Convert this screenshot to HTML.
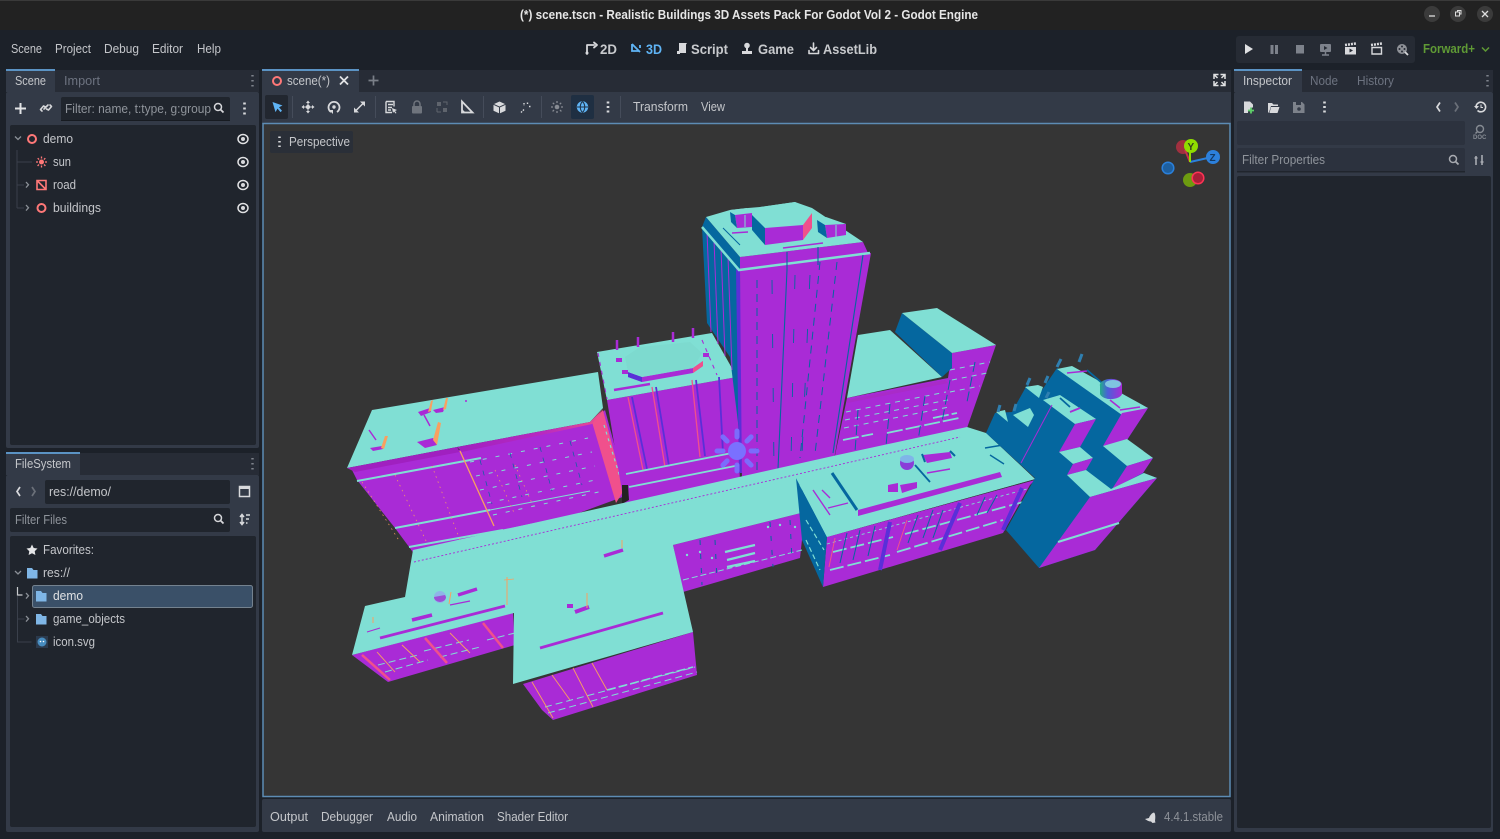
<!DOCTYPE html>
<html><head><meta charset="utf-8"><title>scene.tscn - Godot Engine</title>
<style>
html,body{margin:0;padding:0;background:#1c2129;width:1500px;height:839px;overflow:hidden}
svg{display:block}
text{font-family:"Liberation Sans","DejaVu Sans",sans-serif;font-size:13px;fill:#c4c6ca}
.d{fill:#6d7380}
.h{fill:#8f949b}
.b{font-size:14px;font-weight:bold;fill:#c8cacd}
.i{fill:none;stroke:#d6d7da;stroke-width:1.6;stroke-linecap:round;stroke-linejoin:round}
.r{fill:none;stroke:#ff7878;stroke-width:2}
.w{fill:#d8d9dc}
.f{fill:#7fb6e6}
.c{fill:#80dfd4}.p{fill:#a92bd6}.u{fill:#05679f}.k{fill:#f0508c}.o{fill:#f9a060}.n{fill:#5a2fd8}
.lc{stroke:#80dfd4;fill:none}.lu{stroke:#05679f;fill:none}.lp{stroke:#a92bd6;fill:none}.lk{stroke:#f0508c;fill:none}.ln{stroke:#5a2fd8;fill:none}.lo{stroke:#f9a060;fill:none}
</style></head><body>
<svg width="1500" height="839" viewBox="0 0 1500 839" xmlns="http://www.w3.org/2000/svg">
<defs>
<linearGradient id="st" x1="0" x2="1" y1="0" y2="0"><stop offset="0" stop-color="#a020c0"/><stop offset=".6" stop-color="#b82ac0"/><stop offset="1" stop-color="#f0508c"/></linearGradient>
<linearGradient id="tk" x1="0" x2="1" y1="0" y2="0"><stop offset="0" stop-color="#22b088"/><stop offset=".35" stop-color="#4a60d8"/><stop offset="1" stop-color="#a92bd6"/></linearGradient>
</defs>
<rect width="1500" height="839" fill="#1c2129"/>
<!-- title bar -->
<rect width="1500" height="30" fill="#222222"/>
<rect width="1500" height="1" fill="#3a3a3a"/>
<text x="520" y="19" textLength="458" lengthAdjust="spacingAndGlyphs" style="font-size:12.5px;font-weight:bold;fill:#e6e6e6">(*) scene.tscn - Realistic Buildings 3D Assets Pack For Godot Vol 2 - Godot Engine</text>
<circle cx="1432" cy="14" r="8" fill="#3b3b3b"/><circle cx="1458" cy="14" r="8" fill="#3b3b3b"/><circle cx="1485" cy="14" r="8" fill="#3b3b3b"/>
<path d="M1429 16h6" stroke="#ddd" stroke-width="1.3"/>
<path d="M1455.500 12h4v4h-4zM1457.500 12v-1.500h3.500v3.500h-1.500" stroke="#ddd" fill="none"/>
<path d="M1482 11l6 6M1488 11l-6 6" stroke="#ddd" stroke-width="1.3"/>
<!-- menu -->
<text x="11" y="53" textLength="31" lengthAdjust="spacingAndGlyphs">Scene</text>
<text x="55" y="53" textLength="36" lengthAdjust="spacingAndGlyphs">Project</text>
<text x="104" y="53" textLength="35" lengthAdjust="spacingAndGlyphs">Debug</text>
<text x="152" y="53" textLength="31" lengthAdjust="spacingAndGlyphs">Editor</text>
<text x="197" y="53" textLength="24" lengthAdjust="spacingAndGlyphs">Help</text>
<!-- main switches -->
<path class="i" d="M587 54v-9h7M594 42.500l3 2.500-3 2.500" style="stroke-width:1.800"/><circle cx="587" cy="53" r="1.500" class="w"/>
<text class="b" x="600" y="54" textLength="17" lengthAdjust="spacingAndGlyphs">2D</text>
<path d="M632 44v7h7M632 44l8 8M640 45v3M634 51h4" stroke="#5fb4f5" stroke-width="1.800" fill="none"/>
<text class="b" x="646" y="54" textLength="16" lengthAdjust="spacingAndGlyphs" style="fill:#5fb4f5">3D</text>
<path class="w" d="M679 43h8l-1 1.500v8.500h-8c0-1 .5-2 1-2.500zM677 51h3v3h-3z"/>
<text class="b" x="691" y="54" textLength="37" lengthAdjust="spacingAndGlyphs">Script</text>
<circle cx="747" cy="45.500" r="2.800" class="w"/><path class="w" d="M746 47h2v4h-2zM742 51h10v3h-10z"/>
<text class="b" x="758" y="54" textLength="36" lengthAdjust="spacingAndGlyphs">Game</text>
<path class="i" d="M813.500 43v7M810.500 47.500l3 3 3-3M809 50.500v3h9.500v-3"/>
<text class="b" x="823" y="54" textLength="54" lengthAdjust="spacingAndGlyphs">AssetLib</text>
<!-- play group -->
<rect x="1236" y="36" width="179" height="27" rx="3" fill="#262b34"/>
<path d="M1245 44l8 5-8 5z" fill="#e0e1e3"/>
<path d="M1270.500 45h3v9h-3zM1275 45h3v9h-3z" fill="#7d828b"/>
<rect x="1296" y="45" width="8" height="8.500" fill="#7d828b"/>
<rect x="1320" y="44" width="11" height="8" rx="1" fill="#7d828b"/><path d="M1325.500 52v2.500M1322 55h7" stroke="#7d828b" stroke-width="1.500"/><path d="M1324 46l3.500 2-3.500 2z" fill="#262b34"/>
<path class="w" d="M1345 47h11v7.500h-11z"/><path d="M1345 45l11-1.500" stroke="#d8d9dc" stroke-width="2.500" stroke-dasharray="2 1"/><path d="M1349.500 48.500l3.500 2-3.500 2z" fill="#262b34"/>
<path d="M1372 47.500h9.500v6.500h-9.500z" fill="none" stroke="#d8d9dc" stroke-width="1.400"/><path d="M1371 45l11-1.500" stroke="#d8d9dc" stroke-width="2.500" stroke-dasharray="2 1"/>
<circle cx="1402" cy="49" r="5" fill="#8f9298"/><g fill="#262b34"><circle cx="1402" cy="46.500" r="1"/><circle cx="1399.500" cy="49" r="1"/><circle cx="1404.500" cy="49" r="1"/><circle cx="1402" cy="51.500" r="1"/></g><path d="M1405 52l3 3" stroke="#d8d9dc" stroke-width="1.800"/>
<text x="1423" y="53" textLength="52" lengthAdjust="spacingAndGlyphs" style="font-weight:bold;fill:#5f9a35">Forward+</text>
<path d="M1482 47.500l3.500 3.500 3.500-3.500" stroke="#5f9a35" stroke-width="1.500" fill="none"/>
<!-- Scene dock -->
<rect x="6" y="70" width="253" height="22" fill="#272c36"/>
<rect x="6" y="92" width="253" height="356" fill="#333a47" rx="2"/>
<rect x="6" y="70" width="49" height="22" fill="#333a47"/><rect x="6" y="69" width="49" height="2" fill="#5b93c4"/>
<text x="15" y="85" textLength="31" lengthAdjust="spacingAndGlyphs">Scene</text>
<text class="d" x="64" y="85" textLength="36" lengthAdjust="spacingAndGlyphs">Import</text>
<path d="M252.500 75v1.500M252.500 80v1.500M252.500 85v1.500" stroke="#7e838c" stroke-width="2.400"/>
<path d="M20.500 103v11M15 108.500h11" stroke="#e2e3e5" stroke-width="2"/>
<path class="i" d="M42 111l-1.500-1.500 3-3.500 2 1M50 105l1.500 1.500-3 3.500-2-1M44 109l4-4"/>
<rect x="61" y="97" width="169" height="24" rx="2" fill="#20252d"/><rect x="61" y="120" width="169" height="1" fill="#171b21"/>
<text class="h" x="65" y="113" textLength="146" lengthAdjust="spacingAndGlyphs">Filter: name, t:type, g:group</text>
<circle cx="218" cy="107" r="3.500" fill="none" stroke="#d6d7da" stroke-width="1.500"/><path d="M220.500 109.500l3 3" stroke="#d6d7da" stroke-width="1.800"/>
<path d="M244.500 102.500v2M244.500 107.500v2M244.500 112.500v2" stroke="#d8d9dc" stroke-width="2.600"/>
<rect x="10" y="125" width="246" height="320" rx="2" fill="#20252d"/>
<path d="M15 136.500l3 3 3-3" stroke="#8b9097" stroke-width="1.300" fill="none"/>
<circle cx="32" cy="139" r="4" class="r"/>
<text x="43" y="143" textLength="30" lengthAdjust="spacingAndGlyphs">demo</text>
<path d="M17 150v58M17 162h15M17 185h7M17 208h7" stroke="#3a404b" stroke-width="1"/>
<circle cx="41.500" cy="162" r="2.500" fill="#ff7878"/><path d="M41.500 156.500v2M41.500 165.500v2M36 162h2M45 162h2M37.700 158.200l1.400 1.400M44 164.500l1.400 1.400M45.300 158.200l-1.400 1.400M39 164.500l-1.400 1.400" stroke="#ff7878" stroke-width="1.300"/>
<text x="53" y="166" textLength="18" lengthAdjust="spacingAndGlyphs">sun</text>
<path d="M26 182l2.500 2.800-2.500 2.800" stroke="#8b9097" stroke-width="1.300" fill="none"/>
<path d="M37 180.500h9v9h-9zM37 180.500l9 9" fill="none" stroke="#ff7878" stroke-width="1.600"/>
<text x="53" y="189" textLength="23" lengthAdjust="spacingAndGlyphs">road</text>
<path d="M26 205l2.500 2.800-2.500 2.800" stroke="#8b9097" stroke-width="1.300" fill="none"/>
<circle cx="41.500" cy="208" r="4" class="r"/>
<text x="53" y="212" textLength="48" lengthAdjust="spacingAndGlyphs">buildings</text>
<g fill="none" stroke="#e0e1e3" stroke-width="1.500">
<ellipse cx="243" cy="139" rx="5" ry="4.500"/><ellipse cx="243" cy="162" rx="5" ry="4.500"/><ellipse cx="243" cy="185" rx="5" ry="4.500"/><ellipse cx="243" cy="208" rx="5" ry="4.500"/></g>
<circle cx="243" cy="139" r="2" class="w"/><circle cx="243" cy="162" r="2" class="w"/><circle cx="243" cy="185" r="2" class="w"/><circle cx="243" cy="208" r="2" class="w"/>
<!-- FileSystem -->
<rect x="6" y="453" width="253" height="22" fill="#272c36"/>
<rect x="6" y="475" width="253" height="357" fill="#333a47" rx="2"/>
<rect x="6" y="453" width="74" height="22" fill="#333a47"/><rect x="6" y="452" width="74" height="2" fill="#5b93c4"/>
<text x="15" y="468" textLength="56" lengthAdjust="spacingAndGlyphs">FileSystem</text>
<path d="M252.500 458v1.500M252.500 463v1.500M252.500 468v1.500" stroke="#7e838c" stroke-width="2.400"/>
<path d="M20 487l-3 4.500 3 4.500" stroke="#d8d9dc" stroke-width="1.700" fill="none"/><path d="M32 487l3 4.500-3 4.500" stroke="#6b7079" stroke-width="1.700" fill="none"/>
<rect x="45" y="480" width="185" height="24" rx="2" fill="#20252d"/>
<text x="49" y="496" textLength="62" lengthAdjust="spacingAndGlyphs">res://demo/</text>
<rect x="239.500" y="486.500" width="10" height="10" fill="none" stroke="#d8d9dc" stroke-width="1.500"/><rect x="239" y="486" width="11" height="3" fill="#d8d9dc"/>
<rect x="10" y="508" width="220" height="24" rx="2" fill="#20252d"/>
<text class="h" x="15" y="524" textLength="52" lengthAdjust="spacingAndGlyphs">Filter Files</text>
<circle cx="218" cy="518" r="3.500" fill="none" stroke="#d6d7da" stroke-width="1.500"/><path d="M220.500 520.500l3 3" stroke="#d6d7da" stroke-width="1.800"/>
<path d="M242 515v9M240 517l2-2.500 2 2.500M240 522l2 2.500 2-2.500M246 515h4M246 519h3M246 523h1.500" stroke="#d8d9dc" stroke-width="1.500" fill="none"/>
<rect x="10" y="536" width="246" height="291" rx="2" fill="#20252d"/>
<path d="M32 544.500l1.700 3.500 3.800.5-2.800 2.700.7 3.800-3.400-1.800-3.400 1.800.7-3.800-2.800-2.700 3.800-.5z" fill="#e4e5e7"/>
<text x="43" y="554" textLength="51" lengthAdjust="spacingAndGlyphs">Favorites:</text>
<path d="M15 571l3 3 3-3" stroke="#8b9097" stroke-width="1.300" fill="none"/>
<path class="f" d="M27 568h5l1.500 2h4v8.500h-10.500z"/>
<text x="43" y="577" textLength="27" lengthAdjust="spacingAndGlyphs">res://</text>
<rect x="32.500" y="585.500" width="220" height="22" rx="2" fill="#3a5068" stroke="#74828f"/>
<path d="M17.500 587v8h5" stroke="#c8cacd" stroke-width="1.200" fill="none"/>
<path d="M17.500 596v46h14M17.500 619h7" stroke="#3a404b" fill="none"/>
<path d="M26 593l2.500 2.800-2.500 2.800" stroke="#8b9097" stroke-width="1.300" fill="none"/>
<path class="f" d="M36 591h5l1.500 2h4v8.500h-10.500z"/>
<text x="53" y="600" textLength="30" lengthAdjust="spacingAndGlyphs" style="fill:#dfe1e3">demo</text>
<path d="M26 616l2.500 2.800-2.500 2.800" stroke="#8b9097" stroke-width="1.300" fill="none"/>
<path class="f" d="M36 614h5l1.500 2h4v8.500h-10.500z"/>
<text x="53" y="623" textLength="72" lengthAdjust="spacingAndGlyphs">game_objects</text>
<rect x="36" y="636" width="12" height="12" fill="#2b3a4d"/><circle cx="42" cy="642" r="4.500" fill="#478cbf"/><circle cx="40.500" cy="641.500" r=".8" fill="#fff"/><circle cx="43.500" cy="641.500" r=".8" fill="#fff"/>
<text x="53" y="646" textLength="42" lengthAdjust="spacingAndGlyphs">icon.svg</text>
<!-- center -->
<rect x="262" y="70" width="969" height="22" fill="#272c36"/>
<rect x="262" y="92" width="969" height="32" fill="#333a47"/>
<rect x="262" y="70" width="97" height="22" fill="#333a47"/><rect x="262" y="69" width="97" height="2" fill="#5b93c4"/>
<circle cx="277" cy="81" r="4" class="r"/>
<text x="287" y="85" textLength="43" lengthAdjust="spacingAndGlyphs">scene(*)</text>
<path d="M340 76.500l8 8M348 76.500l-8 8" stroke="#e2e3e5" stroke-width="1.800"/>
<path d="M373.500 75.500v10M368.500 80.500h10" stroke="#7a7f88" stroke-width="1.700"/>
<path d="M1214 79v-4.500h4.500M1225 79v-4.500h-4.500M1214 81v4.500h4.500M1225 81v4.500h-4.500M1214.500 75l3 3M1224.500 75l-3 3M1214.500 85l3-3M1224.500 85l-3-3" stroke="#e0e1e3" stroke-width="1.500" fill="none"/>
<!-- toolbar -->
<rect x="265" y="95" width="23" height="24" rx="2" fill="#222730"/>
<path d="M272.500 102l10 3.500-3.500 1.800 3 3.500-1.500 1.300-3-3.500-2 3.500z" fill="#5fb4f5"/>
<path d="M292.500 96v22M375.500 96v22M483.500 96v22M541.500 96v22M620.500 96v22" stroke="#454c5a" stroke-width="1"/>
<path d="M308 101v12M302 107h12" stroke="#d6d7da" stroke-width="1"/><circle cx="308" cy="107" r="2.200" class="w"/>
<path d="M308 100.500l-2 2.500h4zM308 113.500l-2-2.500h4zM301.500 107l2.500-2v4zM314.500 107l-2.500-2v4z" class="w"/>
<path d="M331 112a5.500 5.500 0 1 1 6 0" fill="none" stroke="#d8d9dc" stroke-width="1.800"/><circle cx="334" cy="107" r="1.700" class="w"/><path d="M329 110h4v4z" class="w"/>
<path d="M355 111.500l8-8" stroke="#d8d9dc" stroke-width="1.500"/><path d="M360 101.500h5v5zM354 107.500v5h5z" class="w"/>
<path d="M386 101.500h8v5M386 101.500v11h6M388 104.500h5M388 107.500h4M388 110h3" stroke="#d8d9dc" stroke-width="1.400" fill="none"/><path d="M392 108l5 2-2 1 1.500 2-1 .5-1.500-2-1 1.500z" class="w"/>
<rect x="412" y="106" width="10" height="7.500" rx="1" fill="#6f747d"/><path d="M414 106v-2a3 3 0 0 1 6 0v2" fill="none" stroke="#6f747d" stroke-width="1.500"/>
<path d="M437 102h4v4h-4zM443 108h4v4h-4z" fill="#5f646d"/><path d="M443 102h4v3M437 112v-4M441 112h-4" fill="none" stroke="#5f646d"/>
<path d="M462 101.500l10.500 11h-10.500z" fill="none" stroke="#d8d9dc" stroke-width="1.800"/><path d="M462 109l3.500 3.500h-3.500z" class="w"/>
<path d="M499.500 101.500l6 2.800v6.400l-6 2.800-6-2.800v-6.400z" class="w"/><path d="M493.500 104.300l6 2.800 6-2.800M499.500 107.100v6.400" stroke="#333a47" stroke-width="1" fill="none"/>
<path d="M521 112.500l3-3M527.500 102.500v2.500M530.500 106.500h-2M524 103v3" stroke="#d8d9dc" stroke-width="1.400" fill="none" stroke-dasharray="1.500 1.200"/>
<circle cx="557" cy="107" r="2.300" fill="#878b93"/><path d="M557 101v2M557 111v2M551 107h2M561 107h2M552.800 102.800l1.400 1.400M560 110l1.400 1.400M561.200 102.800l-1.400 1.400M554 110l-1.400 1.400" stroke="#878b93" stroke-width="1.300"/>
<rect x="571" y="95" width="23" height="24" rx="2" fill="#1f2f42"/>
<circle cx="582.500" cy="107" r="5.700" fill="#5fb4f5"/><path d="M577 107h11M582.500 101.500c-3 3-3 8 0 11M582.500 101.500c3 3 3 8 0 11" stroke="#1f2f42" stroke-width="1" fill="none"/>
<path d="M608 101.500v2M608 106v2M608 110.500v2" stroke="#d8d9dc" stroke-width="2.600"/>
<text x="633" y="111" textLength="55" lengthAdjust="spacingAndGlyphs">Transform</text>
<text x="701" y="111" textLength="24" lengthAdjust="spacingAndGlyphs">View</text>
<!-- viewport -->
<rect x="263" y="123.500" width="967" height="673" fill="#353535" stroke="#5d8cb4" stroke-width="1.500"/>
<!-- 3D scene -->
<!-- back right building -->
<polygon class="p" points="847,398 948,378 952,353 996,345 967,428 833,465"/>
<polygon class="c" points="847,398 858,335 890,330 942,377"/>
<polygon class="u" points="895,332 902,313 952,353 952,368 942,377"/>
<polygon class="c" points="902,313 937,308 996,345 952,353"/>
<polygon points="848,400 945,380 948,383 847,403" fill="#a92bc8"/>
<g class="lc" stroke-width="1" stroke-dasharray="5 5">
<path d="M846 412l100-20M845 420l108-21M844 428l105-21M950 370l40-8M952 380l35-7M950 392l30-6"/></g>
<path class="lc" stroke-width="1.800" stroke-dasharray="16 3" d="M843 440l30-6M887 433l72-15M933 418l24-5"/>
<g class="lu" stroke-width="1" stroke-dasharray="10 5"><path d="M858 410l-3 42M890 404l-4 42M925 396l-7 45M950 380l-8 42M975 362l-8 40"/></g>
<!-- left long building -->
<polygon class="p" points="352,470 460,450 592,423 605,410 628,495 560,520 415,555 395,528 357,480"/>
<polygon class="k" points="592,422 603,410 624,490 616,503"/>
<path class="lc" stroke-width="1.200" stroke-dasharray="3 4" d="M604 425l20 65"/>
<polygon class="c" points="347,468 372,410 598,372 603,408 590,422 457,447"/>
<polygon points="347,468 457,447 460,452 355,472" fill="#a020c0"/>
<polygon points="457,447 590,422 603,409 592,424 462,452" fill="url(#st)"/>
<path class="lc" stroke-width="2" d="M357 481l124-23"/>
<path class="lc" stroke-width="2" d="M395 528l95-18M409 547l94-17"/>
<path class="lc" stroke-width="1" d="M503 530l87-18M490 510l100-19"/>
<path class="lo" stroke-width="1.300" d="M460 451l34 75"/>
<g class="lo" stroke-width=".7" stroke-dasharray="1.500 4"><path d="M362 482l38 60M395 475l32 68M432 466l28 74M495 470l20 45M515 465l20 45"/></g>
<g class="lc" stroke-width="1" stroke-dasharray="4 9"><path d="M470 462l118-24M476 476l116-24M480 490l115-24M487 503l113-24M493 515l110-24"/></g>
<g class="lu" stroke-width=".7" stroke-dasharray="5 6"><path d="M480 460l12 44M510 453l12 44M540 447l12 44M570 441l12 44"/></g>
<polygon class="p" points="418,412 430,408 431,412 421,416"/><polygon class="o" points="428,412 431,401 433,400 431,411"/>
<polygon class="p" points="433,410 445,407 443,412 436,413"/><polygon class="o" points="443,410 446,398 448,398 446,409"/>
<polygon class="p" points="417,442 433,438 437,445 425,448"/><polygon class="o" points="433,440 438,422 441,423 437,445"/>
<polygon class="p" points="370,448 382,446 383,449 373,451"/><polygon class="o" points="381,448 385,436 388,436 384,449"/>
<path class="lp" d="M369 430l7 10M424 415l6 11" stroke-width="1.500"/><circle cx="466" cy="401" r="1" fill="#a92bd6"/>
<!-- center building -->
<polygon class="p" points="607,400 737,377 740,485 625,510"/>
<polygon class="c" points="597,352 712,333 737,377 607,400"/>
<polygon class="p" points="628,372 642,377 693,368 703,361 703,366 693,373 642,382 628,377"/>
<polygon class="n" points="628,372 642,377 642,382 628,377"/>
<polygon class="k" points="693,368 703,361 703,366 693,373"/>
<polygon fill="#7ddacf" points="625,357 640,347 690,342 702,353 693,368 642,377 628,372"/>
<path class="lp" stroke-width="2" d="M614 390l36-6M617 340v10M638 337v10M673 332v10M693 328v10" style="stroke-width:2.500"/>
<path class="lp" stroke-width="1.100" stroke-dasharray="4 5" d="M598 353l9 46M702 340l15 35"/>
<path class="p" d="M616 358h6v4h-6zM622 370h6v4h-6zM703 353h6v4h-6z"/>
<path class="lk" stroke-width="1.300" d="M628 397l15 73M652 387l13 80M692 380l8 77"/>
<path class="ln" stroke-width="1.800" d="M632 397l15 72M656 387l13 79M696 380l9 76M719 377l4 76"/>
<path class="lc" stroke-width="1.800" d="M626 474l111-22M629 487l111-22"/>
<path fill="#222" d="M622 485h6l1 15-7 4z"/>
<!-- tower -->
<polygon class="u" points="702,227 740,270 745,480 730,357 707,323"/>
<g class="lp" stroke-width="1"><path d="M707 232l4 100M714 240l4 104M721 248l4 108M728 256l4 114"/></g>
<path class="ln" stroke-width="4" d="M738 268l3 205"/>
<polygon class="p" points="740,270 871,253 833,465 742,485"/>
<polygon class="u" points="706,217 740,257 740,270 702,227"/>
<polygon class="p" points="740,257 863,242 868,253 740,270"/>
<polygon class="c" points="706,217 730,210 748,208 760,207 795,202 812,208 863,242 740,257"/>
<path class="lc" stroke-width="2.500" d="M702 227l37 43 131-17"/>
<path class="lu" stroke-width="1.100" d="M787 252v18M818 247v18"/>
<polygon class="c" points="752,215 760,207 795,202 813,212 803,225 765,228"/>
<polygon class="u" points="752,215 765,228 765,245 752,230"/>
<polygon class="p" points="765,228 803,225 803,240 765,245"/>
<polygon class="k" points="803,225 812,213 812,228 803,240"/>
<polygon class="c" points="730,210 747,208 752,215 735,217"/><polygon class="p" points="735,215 752,213 752,227 737,228"/><polygon class="u" points="730,212 735,215 737,228 731,222"/>
<path class="lc" d="M745 215v12"/>
<polygon class="c" points="817,220 826,217 846,224 825,227"/><polygon class="p" points="825,225 846,224 846,235 827,238"/><polygon class="u" points="817,220 825,225 827,238 818,232"/>
<path class="lc" d="M836 225v12"/>
<path class="lp" stroke-width="1.500" d="M783 248l40-5M732 233l16-1"/><path class="lu" d="M723 228l17 17"/>
<path class="lu" stroke-width="1.100" d="M787 270l-9 199M863 255l-30 198"/>
<path class="lu" stroke-width="1" stroke-dasharray="8 6" d="M820 262l-20 196M837 262l-22 192M757 280l0 190"/>
<path class="lu" stroke-width=".9" stroke-dasharray="14 40" d="M772 280l2 190M795 275l-4 185M810 275l-8 180"/>
<!-- lower facades -->
<polygon class="p" points="352,655 513,613 515,645 388,682"/>
<polygon class="p" points="523,684 693,632 697,675 553,720 542,710"/>
<polygon class="p" points="673,545 805,512 800,558 683,592"/>
<!-- road -->
<polygon class="c" points="413,550 833,456 967,427 986,433 1035,479 827,537 805,512 673,545 693,632 513,684 514,613 352,655 365,606 405,597"/>
<path stroke="#a92bd6" stroke-width=".9" stroke-dasharray="2 2" d="M414 562l546-125" fill="none"/>
<!-- details on roofs -->
<path class="lp" stroke-width="2.800" d="M540 648l123-35M380 638l125-32"/>
<path class="lp" stroke-width="3.500" d="M604 556l19-6M458 595l19-6M412 620l20-5"/>
<path class="lp" stroke-width="4" d="M575 612l14-5M567 606h6"/>
<path class="lo" stroke-width="1" d="M507 577v28M587 593v15M622 540v8M373 617v6"/>
<circle cx="440" cy="597" r="6" fill="#8fb4e8"/><path d="M434 597a6 5 0 0 0 12 0l-1-2z" fill="#9a50d6"/>
<path class="lp" stroke-width="1.200" d="M450 605l20-4"/><path class="lo" d="M451 592l-2 12" stroke-width="1"/>
<path class="lp" stroke-width="1" d="M367 632l13-4"/>
<path class="lo" d="M504 580l10-1" stroke-width=".8"/>
<!-- facade details -->
<g class="lc" stroke-width="1" stroke-dasharray="7 4">
<path d="M385 672l43-12M440 657l40-10M487 640l28-7M378 665l40-10M424 651l45-11"/>
<path d="M545 707l150-40"/><path d="M548 713l149-41"/></g>
<path class="lc" stroke-width="1.500" stroke-dasharray="9 3" d="M607 690l86-23"/>
<g class="lo" stroke-width=".9"><path d="M377 652l18 20M402 645l18 17M450 633l20 20M532 682l21 36M552 675l18 25M573 668l20 39M592 663l15 27"/></g>
<path class="lk" stroke-width="2.500" d="M362 655l28 25M425 638l22 25M483 623l20 25"/>
<g class="lc" stroke-width="2.200"><path d="M725 552l30-7M727 560l28-7M727 567l28-6"/></g>
<path class="lc" stroke-width="1" stroke-dasharray="6 3" d="M683 580l119-30"/>
<g class="lu" stroke-width="1" stroke-dasharray="5 9"><path d="M700 540l2 45M715 540l2 40M770 522l3 45M790 520l2 40"/></g>
<g fill="#80dfd4"><circle cx="687" cy="555" r="1.200"/><circle cx="700" cy="552" r="1.200"/><circle cx="712" cy="558" r="1.200"/><circle cx="768" cy="527" r="1.200"/><circle cx="780" cy="525" r="1.200"/><circle cx="795" cy="527" r="1.200"/></g>
<!-- mid roof on right -->
<polygon class="p" points="827,537 1035,480 1030,485 1003,533 953,548 823,587"/>
<polygon class="u" points="796,478 827,537 823,587 802,540"/>
<polygon class="c" points="796,478 970,437 986,433 1035,479 827,537"/>
<polygon class="p" points="858,510 1000,472 1002,477 858,516"/>
<path class="lu" stroke-width="3" d="M832 473l25 37"/>
<polygon class="p" points="923,455 950,452 952,458 927,463"/><path class="lu" stroke-width="2" d="M922 454l3 8"/><path class="lu" stroke-width="2" d="M950 451l5 5"/>
<polygon class="p" points="888,485 898,483 898,492 888,492"/><polygon class="p" points="900,485 917,482 917,488 902,493"/>
<ellipse cx="907" cy="463" rx="7" ry="7" fill="#8a3ed8"/><ellipse cx="907" cy="459" rx="7" ry="4" fill="#7fb5e8"/>
<path class="lu" stroke-width="1.800" d="M915 465l15 17"/>
<path class="lp" stroke-width="1.400" d="M927 473l23-4M828 508l20-5M822 490l8 8"/><path class="lp" d="M813 490l17 25" stroke-width="1.400"/>
<path class="lu" stroke-width="1.400" d="M985 448l18-3M990 455l14 9"/>
<path class="lc" stroke-width="1.800" stroke-dasharray="14 4" d="M833 552l60-15M905 534l118-32"/>
<path class="lc" stroke-width="1.800" stroke-dasharray="14 4" d="M830 570l60-15M897 552l106-32"/>
<path class="lc" stroke-width=".9" stroke-dasharray="3 3" d="M827 544l200-55"/>
<path class="lk" stroke-width="1" d="M835 538l-6 29M907 520l-10 30"/>
<g class="ln" stroke-width="4"><path d="M890 522l-10 48M960 503l-20 47M1022 488l-19 42"/></g>
<g class="lu" stroke-width="1"><path d="M847 533l-7 30M860 530l-7 30M875 526l-7 30M918 515l-10 28M933 510l-10 28M943 510l-10 28M985 497l-8 18M997 495l-10 18"/></g>
<path class="lc" stroke-width="1.200" stroke-dasharray="5 3" d="M800 485l24 42M806 520l18 30M806 540l14 30"/>
<!-- right blue tower -->
<polygon class="u" points="986,433 995,413 1012,412 1027,385 1040,393 1057,368 1148,408 1127,440 1153,458 1143,473 1157,478 1095,550 1039,568 1006,530 1035,478"/>
<polygon class="c" points="1057,369 1072,366 1148,408 1122,415"/>
<polygon class="p" points="1122,413 1148,408 1127,440 1103,446"/>
<polygon class="c" points="1043,400 1060,395 1096,419 1075,424"/>
<polygon class="p" points="1075,424 1096,419 1080,447 1059,452"/>
<polygon class="c" points="1059,452 1080,447 1093,458 1073,464"/>
<polygon class="p" points="1073,464 1093,458 1086,470 1067,475"/>
<polygon class="c" points="1103,446 1127,439 1153,458 1127,466"/>
<polygon class="p" points="1127,466 1153,458 1143,473 1112,489"/>
<polygon class="c" points="1067,475 1086,470 1111,489 1144,473 1157,478 1090,497"/>
<polygon class="p" points="1090,497 1157,478 1095,550 1039,568"/>
<path class="lc" stroke-width="2.200" d="M1058 542l61-19"/>
<polygon class="c" points="996,412 1005,410 1008,422"/>
<polygon class="c" points="1013,415 1030,408 1034,415 1028,427"/>
<polygon class="c" points="1025,387 1038,385 1043,387 1039,398"/>
<path class="lp" stroke-width="1" d="M1021 463l31-58"/>
<g stroke="#2f7fb0" stroke-width="3" fill="none"><path d="M998 412l2-7M1014 411l2-7M1027 385l3-7M1045 383l3-7M1057 367l4-8M1079 362l3-8M1046 398l3-6"/></g>
<path class="lp" stroke-width="1.600" d="M1067 373l20-2M1110 400l10 8M1120 410l20-3"/>
<path class="lu" stroke-width="1.800" d="M1087 370l15 13M1060 398l10 9"/>
<path class="lp" stroke-width="1.800" d="M1070 412l10-4"/>
<path d="M1100 386a11 6 0 0 1 22-2v8a11 6 0 0 1-22 2z" fill="url(#tk)"/>
<ellipse cx="1113" cy="384" rx="8" ry="4" fill="#7fc5e0"/>
<!-- sun gizmo -->
<g stroke="#7a70ff" stroke-width="5" stroke-linecap="round" opacity=".95">
<path d="M737 431v6M737 465v6M717 451h6M751 451h6M722.900 436.900l4.200 4.200M746.900 460.900l4.200 4.200M751.100 436.900l-4.200 4.200M727.100 460.900l-4.200 4.200"/></g>
<circle cx="737" cy="451" r="9" fill="#7a70ff"/>
<!-- perspective label -->
<rect x="270" y="131" width="83" height="22" rx="2" fill="#2a2f38"/>
<path d="M279.500 136.500v1.500M279.500 141v1.500M279.500 145.500v1.500" stroke="#d8d9dc" stroke-width="2.500"/>
<text x="289" y="146" textLength="61" lengthAdjust="spacingAndGlyphs">Perspective</text>
<!-- axis gizmo -->
<circle cx="1183" cy="147" r="7" fill="#a0303f"/>
<circle cx="1190" cy="180" r="7" fill="#6d9b10"/>
<circle cx="1168" cy="168" r="5.800" fill="#1e5f9f" stroke="#2a80dc" stroke-width="1.500"/>
<path d="M1190 162l-5-12" stroke="#c8304a" stroke-width="2"/>
<path d="M1190 162l22-5" stroke="#2a80dc" stroke-width="2"/>
<path d="M1190 162v-14" stroke="#8fdc00" stroke-width="2"/>
<circle cx="1198" cy="178" r="5.800" fill="#a81f38" stroke="#ff3355" stroke-width="1.500"/>
<circle cx="1213" cy="157" r="7" fill="#2c80dc"/>
<circle cx="1191" cy="146" r="7" fill="#8fdc00"/>
<text x="1187.500" y="150" style="font-size:10px;font-weight:bold;fill:#33401a">Y</text>
<text x="1209.500" y="161" style="font-size:10px;font-weight:bold;fill:#123a66">Z</text>
<!-- bottom panel -->
<rect x="262" y="799" width="969" height="33" rx="2" fill="#333a47"/>
<text x="270" y="821" textLength="38" lengthAdjust="spacingAndGlyphs">Output</text>
<text x="321" y="821" textLength="52" lengthAdjust="spacingAndGlyphs">Debugger</text>
<text x="387" y="821" textLength="30" lengthAdjust="spacingAndGlyphs">Audio</text>
<text x="430" y="821" textLength="54" lengthAdjust="spacingAndGlyphs">Animation</text>
<text x="497" y="821" textLength="71" lengthAdjust="spacingAndGlyphs">Shader Editor</text>
<path class="w" d="M1145 819l4-1c1-3 3-5 5-5.500 1.500 1 1.500 5 1 8.500l.5 1.500-3 .5-1.500-1.500c-2 0-4-1-6-2.500z"/>
<text x="1164" y="821" textLength="59" lengthAdjust="spacingAndGlyphs" style="fill:#8e9299">4.4.1.stable</text>
<!-- inspector dock -->
<rect x="1234" y="70" width="259" height="22" fill="#272c36"/>
<rect x="1234" y="92" width="259" height="740" rx="2" fill="#333a47"/>
<rect x="1234" y="70" width="68" height="22" fill="#333a47"/><rect x="1234" y="69" width="68" height="2" fill="#5b93c4"/>
<text x="1243" y="85" textLength="49" lengthAdjust="spacingAndGlyphs">Inspector</text>
<text class="d" x="1310" y="85" textLength="28" lengthAdjust="spacingAndGlyphs">Node</text>
<text class="d" x="1357" y="85" textLength="37" lengthAdjust="spacingAndGlyphs">History</text>
<path d="M1487.500 75v1.500M1487.500 80v1.500M1487.500 85v1.500" stroke="#7e838c" stroke-width="2.400"/>
<path class="w" d="M1244 101.500h6l3 3v3h-2.500v3h-2.500v2.500h-4z"/><path d="M1251 107.500v6M1248 110.500h6" stroke="#5fd06a" stroke-width="1.800"/>
<path class="w" d="M1268 103h4l1.500 1.500h4.500v1.500h-7l-2 6.500h-1z"/><path class="w" d="M1271 107h8.500l-2 6h-8z"/>
<path d="M1293 102h9l2.500 2.500v8.500h-11.500z" fill="#7d828b"/><rect x="1296" y="102" width="5" height="3" fill="#333a47"/><circle cx="1299" cy="109" r="1.800" fill="#333a47"/>
<path d="M1324.500 101.500v2M1324.500 106v2M1324.500 110.500v2" stroke="#d8d9dc" stroke-width="2.600"/>
<path d="M1440 102.500l-3 4.500 3 4.500" stroke="#d8d9dc" stroke-width="1.700" fill="none"/><path d="M1455 102.500l3 4.500-3 4.500" stroke="#6b7079" stroke-width="1.700" fill="none"/>
<path d="M1476 107a4.800 4.800 0 1 1 1.500 3.500" stroke="#d8d9dc" stroke-width="1.600" fill="none"/><path d="M1474 106h5l-2.500 3z" class="w"/><path d="M1481 104.500v3h2" stroke="#d8d9dc" fill="none"/>
<rect x="1237" y="121" width="228" height="24" rx="2" fill="#2c323e"/>
<circle cx="1480" cy="129" r="3.500" fill="none" stroke="#868b93" stroke-width="1.400"/><path d="M1477.500 131.500l-2 2" stroke="#868b93" stroke-width="1.500"/>
<text x="1473" y="139" style="font-size:6px;font-weight:bold;fill:#868b93">DOC</text>
<rect x="1237" y="148" width="228" height="24" rx="2" fill="#2c323e"/><rect x="1237" y="171" width="228" height="1.500" fill="#20252d"/>
<text class="h" x="1242" y="164" textLength="83" lengthAdjust="spacingAndGlyphs">Filter Properties</text>
<circle cx="1453" cy="159" r="3.500" fill="none" stroke="#a8abb1" stroke-width="1.500"/><path d="M1455.500 161.500l3 3" stroke="#a8abb1" stroke-width="1.800"/>
<path d="M1476 156v9M1482 155v10M1474.500 158h3M1480.500 162h3" stroke="#a8abb1" stroke-width="1.600" fill="none"/>
<rect x="1237" y="176" width="254" height="652" rx="2" fill="#20252d"/>
</svg>
</body></html>
